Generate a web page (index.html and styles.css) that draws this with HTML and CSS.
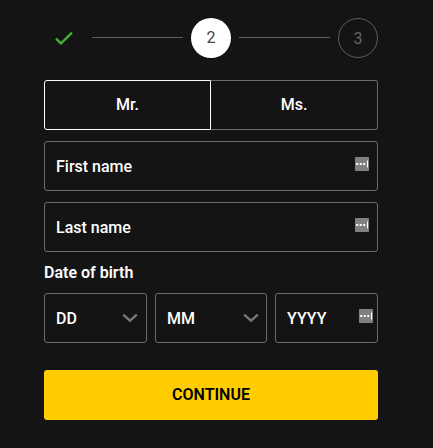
FILE: index.html
```html
<!DOCTYPE html>
<html lang="en">
<head>
    <meta charset="UTF-8">
    <meta name="viewport" content="width=device-width, initial-scale=1.0">
    <title>Registration</title>
    <link rel="stylesheet" href="styles.css">
</head>
<body>
    <div class="steps">
        <div class="step done">
            <svg width="20" height="16" viewBox="0 0 20 16"><path d="M2 8.6 L7 13.4 L18 2.6"/></svg>
        </div>
        <div class="step-line"></div>
        <div class="step active">2</div>
        <div class="step-line"></div>
        <div class="step next">3</div>
    </div>

    <form class="form">
        <div class="title-switch">
            <button type="button" class="title-option selected">Mr.</button>
            <button type="button" class="title-option">Ms.</button>
        </div>

        <div class="field">
            <input type="text" placeholder="First name" aria-label="First name">
            <svg class="fill-icon" width="14" height="14" viewBox="0 0 14 14"><rect class="box" width="14" height="14" rx="1"/><path d="M1.2 6h2v2h-2z M4.7 6h2v2h-2z M8.2 6h2v2h-2z M12 3.5h1v7h-1z"/></svg>
        </div>
        <div class="field">
            <input type="text" placeholder="Last name" aria-label="Last name">
            <svg class="fill-icon" width="14" height="14" viewBox="0 0 14 14"><rect class="box" width="14" height="14" rx="1"/><path d="M1.2 6h2v2h-2z M4.7 6h2v2h-2z M8.2 6h2v2h-2z M12 3.5h1v7h-1z"/></svg>
        </div>

        <div class="label">Date of birth</div>
        <div class="birth">
            <div class="field">
                <span class="value">DD</span>
                <svg class="arrow" width="16" height="10" viewBox="0 0 16 10"><path d="M1.2 1.6 L8 7.6 L14.8 1.6"/></svg>
            </div>
            <div class="field month">
                <span class="value">MM</span>
                <svg class="arrow" width="16" height="10" viewBox="0 0 16 10"><path d="M1.2 1.6 L8 7.6 L14.8 1.6"/></svg>
            </div>
            <div class="field year">
                <input type="text" placeholder="YYYY" aria-label="Year">
                <svg class="fill-icon" width="14" height="14" viewBox="0 0 14 14"><rect class="box" width="14" height="14" rx="1"/><path d="M1.2 6h2v2h-2z M4.7 6h2v2h-2z M8.2 6h2v2h-2z M12 3.5h1v7h-1z"/></svg>
            </div>
        </div>

        <button type="button" class="continue">CONTINUE</button>
    </form>
</body>
</html>
```

FILE: styles.css
```css
* {
    box-sizing: border-box;
}
body {
    margin: 0;
    padding: 18px 55px 28px 44px;
    background-color: #141414;
    color: #fff;
    font-family: Roboto, sans-serif;
    font-size: 16px;
    line-height: 20px;
}
.steps {
    display: flex;
    align-items: center;
    gap: 8px;
    margin-bottom: 22px;
}
.step {
    display: flex;
    align-items: center;
    justify-content: center;
    flex: none;
    width: 40px;
    height: 40px;
    border-radius: 50%;
}
.step.done path {
    fill: none;
    stroke: #45b035;
    stroke-width: 2.2;
}
.step.active {
    background-color: #fff;
    color: #444;
}
.step.next {
    padding-top: 1px;
    border: 1px solid #5e5e5e;
    color: #666;
}
.step-line {
    flex: 1;
    height: 1px;
    margin-bottom: 1px;
    background-color: #5e5e5e;
}
.form {
    display: flex;
    flex-direction: column;
    gap: 11px;
}
.title-switch {
    display: flex;
    height: 50px;
}
.title-option {
    width: 50%;
    padding: 0 0 2px;
    border: 1px solid #6b6b6b;
    border-left: none;
    border-radius: 0 3px 3px 0;
    background: none;
    color: #fff;
    font: 500 16px Roboto, sans-serif;
}
.title-option.selected {
    border: 1px solid #fff;
    border-radius: 3px 0 0 3px;
}
.field {
    display: flex;
    align-items: center;
    justify-content: space-between;
    height: 50px;
    padding: 0 8px 0 11px;
    border: 1px solid #6b6b6b;
    border-radius: 3px;
}
.field input {
    flex: 1;
    min-width: 0;
    height: 48px;
    padding: 0;
    border: none;
    outline: none;
    background: none;
    color: #fff;
    font: 500 16px Roboto, sans-serif;
}
.field input::placeholder {
    color: #fff;
    opacity: 1;
}
.value {
    padding-top: 2px;
    font-weight: 500;
}
.fill-icon {
    flex: none;
    margin-bottom: 4px;
}
.fill-icon .box {
    fill: #808080;
}
.fill-icon path {
    fill: #fff;
}
.arrow path {
    fill: none;
    stroke: #777;
    stroke-width: 2.4;
}
.label {
    height: 19px;
    font-weight: 600;
}
.birth {
    display: grid;
    grid-template-columns: 103px 112px 103px;
    gap: 8px;
}
.birth .month {
    padding-right: 7px;
}
.birth .year {
    padding-right: 4px;
}
.continue {
    height: 50px;
    margin-top: 16px;
    padding: 0 0 2px;
    border: none;
    border-radius: 3px;
    background-color: #fc0;
    color: #000;
    font: 600 16px Roboto, sans-serif;
}
```
